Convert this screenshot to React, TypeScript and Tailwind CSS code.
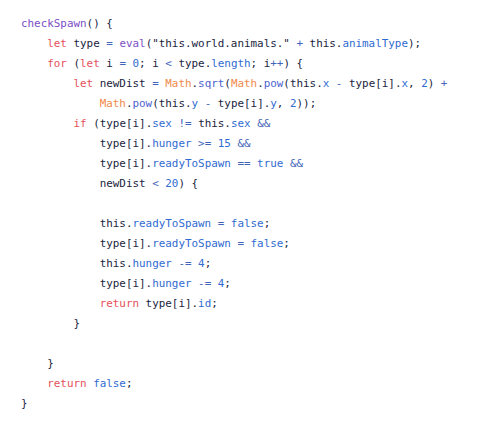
const code = `checkSpawn() {
    let type = eval("this.world.animals." + this.animalType);
    for (let i = 0; i < type.length; i++) {
        let newDist = Math.sqrt(Math.pow(this.x - type[i].x, 2) +
            Math.pow(this.y - type[i].y, 2));
        if (type[i].sex != this.sex &&
            type[i].hunger >= 15 &&
            type[i].readyToSpawn == true &&
            newDist < 20) {

            this.readyToSpawn = false;
            type[i].readyToSpawn = false;
            this.hunger -= 4;
            type[i].hunger -= 4;
            return type[i].id;
        }

    }
    return false;
}`;

const styles = {
  kw: "text-[#e5505a]",
  fn: "text-[#7b4fc6]",
  method: "text-[#4d63cf]",
  math: "text-[#f08a4b]",
  prop: "text-[#2f6bd1]",
  lit: "text-[#2f6bd1]",
  op: "text-[#3f64b8]",
  plain: "",
};

type Kind = keyof typeof styles;

const keywords = ["let", "for", "if", "return"];

// tiny js highlighter, good enough for this snippet
function tokenize(line: string): [string, Kind][] {
  const out: [string, Kind][] = [];
  const re = /("[^"]*")|([A-Za-z_]\w*)|(\d+)|(\+\+|==|!=|>=|-=|&&|[=<+\-])|(\s+)|(.)/g;
  let m: RegExpExecArray | null;
  while ((m = re.exec(line))) {
    const [t, str, word, num, op] = m;
    const prev = line[m.index - 1];
    const next = line[m.index + t.length];
    if (str) out.push([t, "plain"]);
    else if (word) {
      if (keywords.includes(word)) out.push([t, "kw"]);
      else if (word === "true" || word === "false") out.push([t, "lit"]);
      else if (word === "Math") out.push([t, "math"]);
      else if (prev === "." && next === "(") out.push([t, "method"]);
      else if (prev === ".") out.push([t, "prop"]);
      else if (next === "(") out.push([t, "fn"]);
      else out.push([t, "plain"]);
    } else if (num) out.push([t, "lit"]);
    else if (op) out.push([t, "op"]);
    else out.push([t, "plain"]);
  }
  return out;
}

export default function App() {
  const lines = code.split("\n");
  return (
    <div className="w-[500px] h-[426px] bg-white overflow-hidden">
      <pre className="pl-[21px] pt-[14px] font-['DejaVu_Sans_Mono',monospace] text-[10.9px] leading-[20px] text-[#1a2540]">
        {lines.map((line, i) => (
          <div key={i} className="h-[20px] whitespace-pre">
            {tokenize(line).map(([t, k], j) => (
              <span key={j} className={styles[k]}>
                {t}
              </span>
            ))}
          </div>
        ))}
      </pre>
    </div>
  );
}
